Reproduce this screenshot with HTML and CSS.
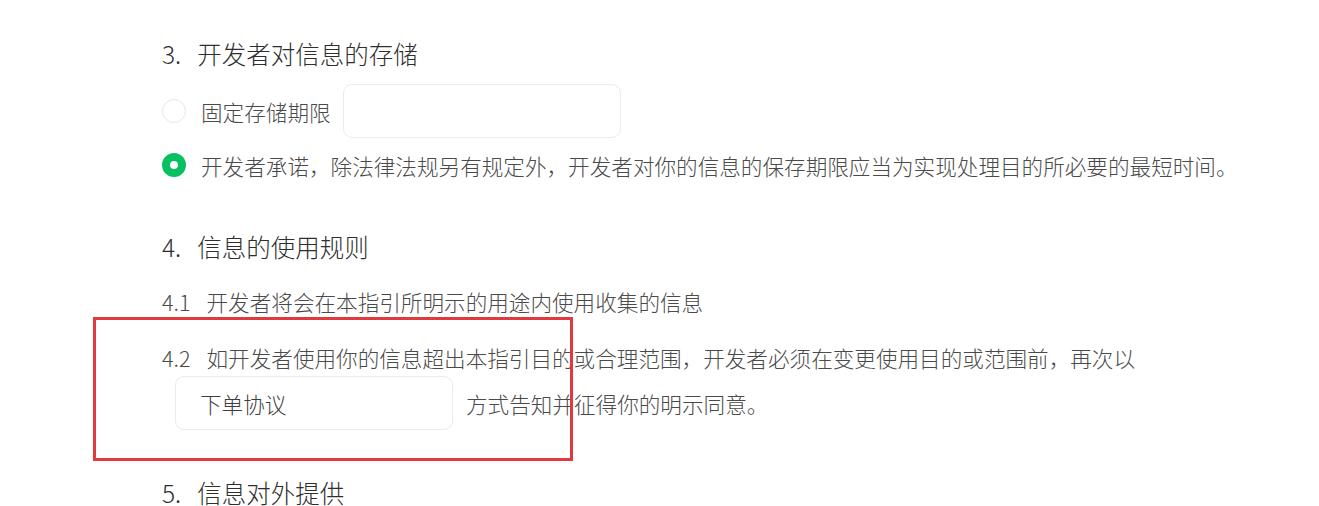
FILE: index.html
```html
<!DOCTYPE html>
<html lang="zh-CN">
<head>
<meta charset="utf-8">
<link rel="stylesheet" href="styles.css">
</head>
<body>
<div class="page">
  <h2 class="sec sec-3"><span class="num">3.</span>开发者对信息的存储</h2>
  <div class="opt opt-fixed">
    <span class="radio"></span>
    <span class="label">固定存储期限</span>
    <span class="field field-period"></span>
  </div>
  <div class="opt opt-promise">
    <span class="radio radio-on"></span>
    <span class="label">开发者承诺，除法律法规另有规定外，开发者对你的信息的保存期限应当为实现处理目的所必要的最短时间。</span>
  </div>

  <h2 class="sec sec-4"><span class="num">4.</span>信息的使用规则</h2>
  <p class="item item-41"><span class="num">4.1</span>开发者将会在本指引所明示的用途内使用收集的信息</p>
  <p class="item item-42"><span class="num">4.2</span>如开发者使用你的信息超出本指引目的或合理范围，开发者必须在变更使用目的或范围前，再次以</p>
  <div class="cont">
    <span class="field field-way">下单协议</span>
    <span class="label">方式告知并征得你的明示同意。</span>
  </div>

  <h2 class="sec sec-5"><span class="num">5.</span>信息对外提供</h2>

  <div class="mark"></div>
</div>
</body>
</html>
```

FILE: styles.css
```css
html, body {
  margin: 0;
  padding: 0;
  background: #ffffff;
}
body {
  font-family: "Noto Sans CJK SC", "Noto Sans", sans-serif;
  font-weight: 300;
  color: #4a4a4a;
  width: 1319px;
  height: 506px;
  overflow: hidden;
}
.page {
  position: relative;
  padding: 38px 0 0 162px;
}
.sec {
  margin: 0;
  font-size: 24.5px;
  line-height: 32px;
  font-weight: 300;
  color: #2e2e2e;
}
.num {
  margin-right: 16px;
}
.opt {
  display: flex;
  align-items: center;
  font-size: 21.6px;
}
.opt-fixed {
  margin-top: 14px;
  height: 54px;
}
.opt-promise {
  margin-top: 12px;
  height: 30px;
}
.radio {
  box-sizing: border-box;
  flex: none;
  width: 24px;
  height: 24px;
  border-radius: 50%;
  border: 1.5px solid #e6e6e6;
  background: #fff;
  margin-right: 15px;
}
.radio-on {
  border: 8px solid #07c160;
  background: #ffffff;
}
.label {
  white-space: nowrap;
}
.field {
  box-sizing: border-box;
  display: flex;
  align-items: center;
  width: 278px;
  height: 54px;
  border: 1px solid #ebebeb;
  border-radius: 9px;
  background: #fff;
}
.field-period {
  margin-left: 12px;
}
.sec-4 {
  margin-top: 51px;
}
.item {
  margin: 0;
  font-size: 21.6px;
  line-height: 30px;
}
.item-41 {
  margin-top: 24px;
}
.item-42 {
  margin-top: 26px;
}
.cont {
  display: flex;
  align-items: center;
  font-size: 21.6px;
  margin-top: 3px;
  padding-left: 13px;
}
.field-way {
  padding-left: 24px;
  margin-right: 13px;
  color: #3e3e3e;
}
.sec-5 {
  margin-top: 47px;
}
.mark {
  position: absolute;
  left: 93px;
  top: 317px;
  width: 480px;
  height: 144px;
  box-sizing: border-box;
  border: 3px solid #e0393e;
}
```
